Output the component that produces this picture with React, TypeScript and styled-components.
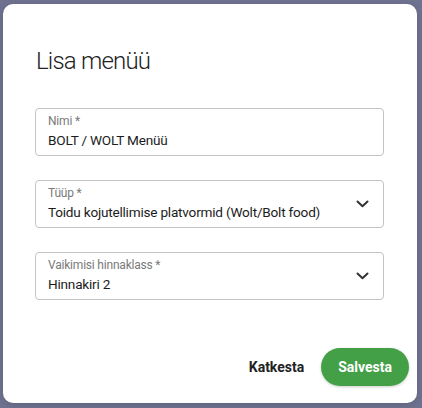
import React from "react";
import styled, { createGlobalStyle } from "styled-components";

const Global = createGlobalStyle`
  html, body { margin: 0; padding: 0; }
  body {
    background: #6f7390;
    font-family: Roboto, "Noto Sans", Arial, sans-serif;
    width: 422px;
    height: 408px;
    overflow: hidden;
  }
`;

const Overlay = styled.div`
  box-sizing: border-box;
  width: 422px;
  height: 408px;
  padding: 4px 5px 5px 3px;
  display: flex;
`;

const Modal = styled.div`
  flex: 1;
  background: #ffffff;
  border-radius: 10px;
  padding: 41px 33px 0 32px;
  display: flex;
  flex-direction: column;
  box-shadow: 0 2px 8px rgba(0, 0, 0, 0.15);
`;

const Title = styled.h2`
  margin: 0 0 0 1px;
  font-size: 24px;
  font-weight: 300;
  color: #222;
  line-height: 32px;
  letter-spacing: -0.8px;
`;

const Fields = styled.div`
  display: flex;
  flex-direction: column;
  gap: 24px;
  margin-top: 31px;
`;

const Field = styled.div`
  box-sizing: border-box;
  height: 48px;
  border: 1px solid #c4c4c4;
  border-radius: 4px;
  padding: 5px 14px 0 12px;
  display: flex;
  align-items: center;
  justify-content: space-between;
`;

const FieldText = styled.div`
  display: flex;
  flex-direction: column;
  align-self: flex-start;
`;

const Label = styled.span`
  font-size: 12px;
  line-height: 15px;
  color: #7a7a7a;
  letter-spacing: -0.2px;
`;

const Value = styled.span`
  font-size: 13.6px;
  line-height: 22px;
  color: #1c1c1c;
  letter-spacing: -0.22px;
`;

const Chevron = styled.svg`
  width: 13px;
  height: 8px;
  margin-top: -5px;
`;

const Actions = styled.div`
  margin-top: auto;
  margin-bottom: 17px;
  margin-right: -25px;
  display: flex;
  justify-content: flex-end;
  align-items: center;
  gap: 17px;
`;

const TextButton = styled.button`
  border: none;
  background: none;
  padding: 0;
  font-family: inherit;
  font-size: 14px;
  font-weight: 700;
  color: #222;
`;

const PrimaryButton = styled.button`
  border: none;
  background: #43a047;
  color: #fff;
  font-family: inherit;
  font-size: 14px;
  font-weight: 700;
  height: 38px;
  padding: 0 17px;
  border-radius: 19px;
  box-shadow: 0 1px 3px rgba(0, 0, 0, 0.2);
`;

const ChevronIcon = () => (
  <Chevron viewBox="0 0 13 8" fill="none">
    <path d="M1.5 1.5 L6.5 6.3 L11.5 1.5" stroke="#333" strokeWidth="2" strokeLinecap="round" strokeLinejoin="round" />
  </Chevron>
);

export default function App() {
  return (
    <>
      <Global />
      <Overlay>
        <Modal>
          <Title>Lisa menüü</Title>
          <Fields>
            <Field>
              <FieldText>
                <Label>Nimi *</Label>
                <Value>BOLT / WOLT Menüü</Value>
              </FieldText>
            </Field>
            <Field>
              <FieldText>
                <Label>Tüüp *</Label>
                <Value>Toidu kojutellimise platvormid (Wolt/Bolt food)</Value>
              </FieldText>
              <ChevronIcon />
            </Field>
            <Field>
              <FieldText>
                <Label>Vaikimisi hinnaklass *</Label>
                <Value>Hinnakiri 2</Value>
              </FieldText>
              <ChevronIcon />
            </Field>
          </Fields>
          <Actions>
            <TextButton>Katkesta</TextButton>
            <PrimaryButton>Salvesta</PrimaryButton>
          </Actions>
        </Modal>
      </Overlay>
    </>
  );
}
